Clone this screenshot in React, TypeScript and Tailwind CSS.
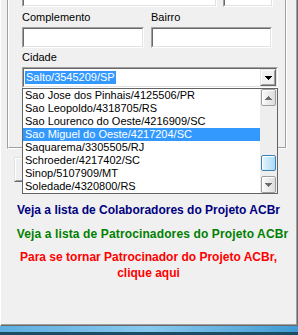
import type { ReactNode } from "react";

const cities = [
  "Sao Jose dos Pinhais/4125506/PR",
  "Sao Leopoldo/4318705/RS",
  "Sao Lourenco do Oeste/4216909/SC",
  "Sao Miguel do Oeste/4217204/SC",
  "Saquarema/3305505/RJ",
  "Schroeder/4217402/SC",
  "Sinop/5107909/MT",
  "Soledade/4320800/RS",
];
const selected = 3;

function Sunken({ className = "", children }: { className?: string; children?: ReactNode }) {
  return (
    <div className={`border border-t-[#a0a0a0] border-l-[#a0a0a0] border-b-white border-r-white ${className}`}>
      <div className="h-full border border-t-[#696969] border-l-[#696969] border-b-[#e3e3e3] border-r-[#e3e3e3] bg-white">
        {children}
      </div>
    </div>
  );
}

function Raised({ className = "", children }: { className?: string; children?: ReactNode }) {
  return (
    <div className={`border border-t-[#e3e3e3] border-l-[#e3e3e3] border-b-[#696969] border-r-[#696969] ${className}`}>
      <div className="flex h-full items-center justify-center border border-t-white border-l-white border-b-[#a0a0a0] border-r-[#a0a0a0] bg-[#f0f0f0]">
        {children}
      </div>
    </div>
  );
}

// pixel triangle, 7x4
function Tri({ up = false, color }: { up?: boolean; color: string }) {
  const rows = [7, 5, 3, 1];
  return (
    <svg width="7" height="4" shapeRendering="crispEdges">
      {rows.map((w, i) => (
        <rect key={i} x={(7 - w) / 2} y={up ? 3 - i : i} width={w} height="1" fill={color} />
      ))}
    </svg>
  );
}

function ScrollButton({ up = false }: { up?: boolean }) {
  return (
    <div className="flex h-[17px] items-center justify-center rounded-[2px] border border-[#9d9d9d] bg-gradient-to-r from-[#fbfbfb] to-[#dcdcdc] shadow-[inset_1px_1px_0_#ffffff]">
      <Tri up={up} color="#6d6d6d" />
    </div>
  );
}

export default function App() {
  return (
    <div
      className="flex h-[335px] w-[298px] flex-col overflow-hidden bg-[#f0f0f0] text-[11px] leading-[13px] text-black"
      style={{ fontFamily: '"Liberation Sans", Arial, sans-serif' }}
    >
      <div className="flow-root h-[326px] shrink-0 border-l border-r border-b border-l-white border-r-[#696969] border-b-[#696969]">
        <div className="relative flow-root h-full border-r border-b border-r-[#a0a0a0] border-b-[#a0a0a0]">
          {/* group box, top cut off */}
          <div className="ml-[6px] mt-[-14px] w-[280px] border-l border-r border-b border-l-[#a0a0a0] border-r-white border-b-white">
            <div className="border-l border-r border-b border-l-white border-r-[#a0a0a0] border-b-[#a0a0a0] pl-[13px] pb-[59px]">
              <div className="flex gap-[6px]">
                <Sunken className="h-[21px] w-[195px]" />
                <Sunken className="h-[21px] w-[50px]" />
              </div>
              <div className="mt-[4px] flex gap-[7px]">
                <div className="w-[122px]">
                  <div>Complemento</div>
                  <Sunken className="mt-[3px] h-[21px]" />
                </div>
                <div className="w-[121px]">
                  <div>Bairro</div>
                  <Sunken className="mt-[3px] h-[21px]" />
                </div>
              </div>
              <div className="mt-[3px]">Cidade</div>
              <Sunken className="mt-[3px] h-[21px] w-[256px]">
                <div className="flex h-full items-center justify-between">
                  <span className="ml-[1px] bg-[#3399ff] px-[1px] text-white">Salto/3545209/SP</span>
                  <Raised className="h-full w-[16px]">
                    <Tri color="#000000" />
                  </Raised>
                </div>
              </Sunken>
            </div>
          </div>

          {/* button hidden behind the drop-down list */}
          <Raised className="ml-[13px] mt-[8px] h-[25px] w-[75px]" />

          <div className="mt-[21px] text-center text-[12px] font-bold leading-[14px]">
            <div className="text-[#000080]">Veja a lista de Colaboradores do Projeto ACBr</div>
            <div className="mt-[10px] pl-[8px] tracking-[0.13px] text-[#008000]">
              Veja a lista de Patrocinadores do Projeto ACBr
            </div>
            <div className="mt-[8px] leading-[16px] text-[#ff0000]">
              Para se tornar Patrocinador do Projeto ACBr,
              <br />
              clique aqui
            </div>
          </div>

          {/* open drop-down list */}
          <div className="absolute left-[21px] top-[88px] flex h-[106px] w-[256px] border border-[#646464] bg-white">
            <div className="flex-1">
              {cities.map((c, i) => (
                <div
                  key={c}
                  className={`h-[13px] whitespace-nowrap pl-[2px] ${i === selected ? "bg-[#3399ff] text-white" : ""}`}
                >
                  {c}
                </div>
              ))}
            </div>
            <div className="flex w-[17px] flex-col bg-[#eeeeee] px-[1px]">
              <ScrollButton up />
              <div className="h-[49px]" />
              <div className="h-[16px] rounded-[2px] border border-[#3c7fb1] bg-gradient-to-r from-[#e3f4fc] to-[#a9dbf6] shadow-[inset_1px_1px_0_#ffffff]" />
              <div className="h-[5px]" />
              <ScrollButton />
            </div>
          </div>
        </div>
      </div>
      <div className="h-[6px] shrink-0 bg-gradient-to-r from-[#5eaee2] via-[#88c9ef] to-[#3f9bd4]" />
      <div className="h-[3px] shrink-0 bg-[#1a4d63]" />
    </div>
  );
}
